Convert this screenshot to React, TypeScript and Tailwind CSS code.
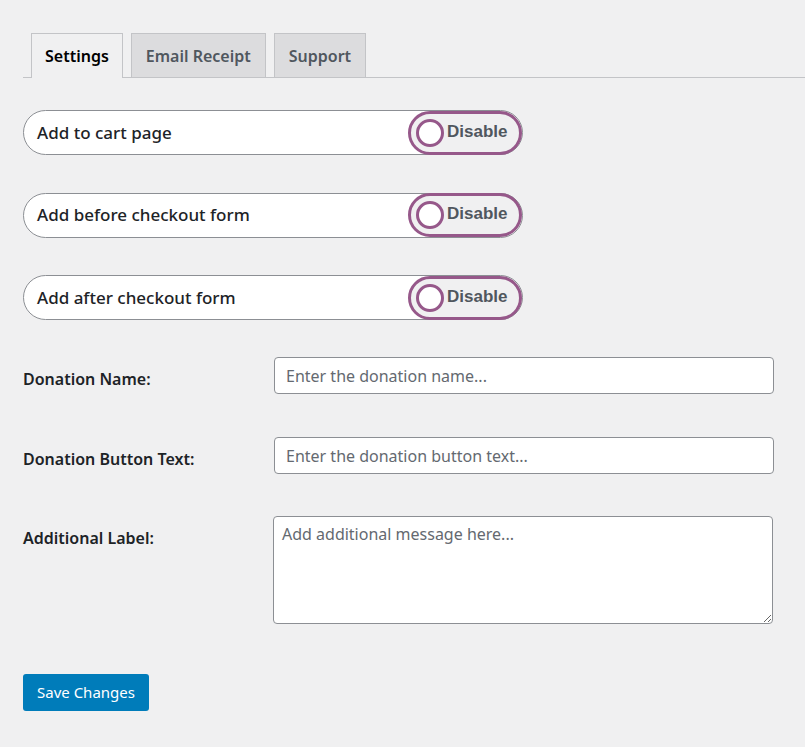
import React from "react";

const FONT = { fontFamily: '"Noto Sans", "Open Sans", sans-serif' };

function Toggle() {
  return (
    <div className="flex h-[44px] w-[114px] items-center rounded-full border-[3px] border-[#96588a] bg-[#f0f0f1] pl-[5px]">
      <span className="h-[28px] w-[28px] rounded-full border-[3px] border-[#96588a] bg-white" />
      <span
        className="ml-[3px] -mt-[2px] text-[17px] font-bold text-[#50575e]"
        style={{ fontFamily: '"Liberation Sans", Arial, sans-serif' }}
      >
        Disable
      </span>
    </div>
  );
}

function ToggleRow({ label }: { label: string }) {
  return (
    <div className="flex h-[45px] w-[500px] items-center justify-between rounded-full border border-[#8c8f94] bg-white pl-[13px]">
      <span className="text-[17px] font-medium text-[#1d2327]">{label}</span>
      <Toggle />
    </div>
  );
}

function FieldRow({ label, children }: { label: string; children: React.ReactNode }) {
  return (
    <div className="flex items-start">
      <label className="w-[251px] pt-[10px] text-[16px] font-semibold text-[#1d2327]">{label}</label>
      {children}
    </div>
  );
}

export default function App() {
  const tabs = ["Settings", "Email Receipt", "Support"];
  return (
    <div className="min-h-[747px] w-[805px] bg-[#f0f0f1] pt-[33px]" style={FONT}>
      <div className="ml-[23px] flex items-end gap-[8px] border-b border-[#c3c4c7] pl-[8px]">
        {tabs.map((t, i) => (
          <div
            key={t}
            className={
              i === 0
                ? "-mb-px flex h-[45px] items-center border border-b-0 border-[#c3c4c7] bg-[#f0f0f1] px-[13px] text-[16px] font-semibold text-[#000]"
                : "flex h-[44px] items-center border border-b-0 border-[#c3c4c7] bg-[#dcdcde] px-[14px] text-[16px] font-semibold text-[#50575e]"
            }
          >
            {t}
          </div>
        ))}
      </div>

      <div className="ml-[23px] mt-[32px] flex flex-col gap-[37.5px]">
        <ToggleRow label="Add to cart page" />
        <ToggleRow label="Add before checkout form" />
        <ToggleRow label="Add after checkout form" />
      </div>

      <div className="ml-[23px] mt-[37px] flex flex-col">
        <FieldRow label="Donation Name:">
          <input
            className="h-[37px] w-[500px] rounded-[4px] border border-[#8c8f94] bg-white px-[11px] text-[16px] text-[#2c3338] placeholder:text-[#646970] outline-none"
            placeholder="Enter the donation name..."
          />
        </FieldRow>
        <div className="mt-[43px]">
          <FieldRow label="Donation Button Text:">
            <input
              className="h-[37px] w-[500px] rounded-[4px] border border-[#8c8f94] bg-white px-[11px] text-[16px] text-[#2c3338] placeholder:text-[#646970] outline-none"
              placeholder="Enter the donation button text..."
            />
          </FieldRow>
        </div>
        <div className="mt-[42px]">
          <FieldRow label="Additional Label:">
            <textarea
              className="-ml-px h-[108px] w-[500px] rounded-[4px] border border-[#8c8f94] bg-white px-[8px] py-[5px] text-[16px] text-[#2c3338] placeholder:text-[#646970] outline-none"
              placeholder="Add additional message here..."
            />
          </FieldRow>
        </div>
      </div>

      <button className="ml-[23px] mt-[50px] h-[37px] rounded-[3px] bg-[#007cba] px-[14px] text-[15px] text-white">
        Save Changes
      </button>
    </div>
  );
}
